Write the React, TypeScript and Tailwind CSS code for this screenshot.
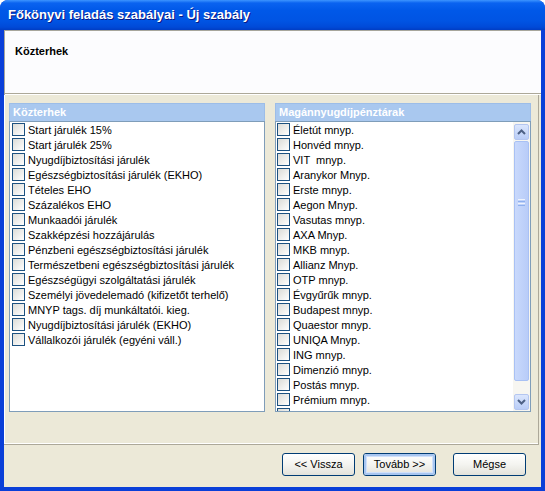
import React from "react";

const kozterhek = [
  "Start járulék 15%",
  "Start járulék 25%",
  "Nyugdíjbiztosítási járulék",
  "Egészségbiztosítási járulék (EKHO)",
  "Tételes EHO",
  "Százalékos EHO",
  "Munkaadói járulék",
  "Szakképzési hozzájárulás",
  "Pénzbeni egészségbiztosítási járulék",
  "Természetbeni egészségbiztosítási járulék",
  "Egészségügyi szolgáltatási járulék",
  "Személyi jövedelemadó (kifizetőt terhelő)",
  "MNYP tags. díj munkáltatói. kieg.",
  "Nyugdíjbiztosítási járulék (EKHO)",
  "Vállalkozói járulék (egyéni váll.)",
];

const penztarak = [
  "Életút mnyp.",
  "Honvéd mnyp.",
  "VIT  mnyp.",
  "Aranykor Mnyp.",
  "Erste mnyp.",
  "Aegon Mnyp.",
  "Vasutas mnyp.",
  "AXA Mnyp.",
  "MKB mnyp.",
  "Allianz Mnyp.",
  "OTP mnyp.",
  "Évgyűrűk mnyp.",
  "Budapest mnyp.",
  "Quaestor mnyp.",
  "UNIQA Mnyp.",
  "ING mnyp.",
  "Dimenzió mnyp.",
  "Postás mnyp.",
  "Prémium mnyp.",
  "",
];

function CheckRow({ label }: { label: string }) {
  return (
    <div className="h-[15px] flex items-center shrink-0">
      <span className="w-[13px] h-[13px] shrink-0 border border-[#1c5180] bg-linear-to-br from-[#dcdcd7] to-white" />
      {label && <span className="ml-[3px] whitespace-pre text-black leading-[14px]">{label}</span>}
    </div>
  );
}

function Arrow({ up }: { up?: boolean }) {
  return (
    <svg width="9" height="6" viewBox="0 0 9 6">
      <path
        d={up ? "M1 5 L4.5 1.5 L8 5" : "M1 1 L4.5 4.5 L8 1"}
        fill="none"
        stroke="#4d6185"
        strokeWidth="2"
      />
    </svg>
  );
}

function ScrollBar() {
  return (
    <div className="w-[17px] shrink-0 flex flex-col bg-[#f7f6f1] pt-[2px] pb-[1px]">
      <div className="h-[16px] mx-[1px] rounded-[2px] border border-[#b4c6f0] bg-linear-to-b from-[#dbe6fd] to-[#b9cdf7] flex items-center justify-center">
        <Arrow up />
      </div>
      <div className="h-[240px] mx-[1px] mt-[1px] rounded-[2px] border border-[#a9c1f4] bg-linear-to-r from-[#c9d9fc] to-[#b8ccf8] flex items-center justify-center">
        <div className="flex flex-col gap-[1px] -mt-[118px]">
          <span className="w-[7px] h-[1px] bg-[#eef3fd]" />
          <span className="w-[7px] h-[1px] bg-[#8fb0ee]" />
          <span className="w-[7px] h-[1px] bg-[#eef3fd]" />
          <span className="w-[7px] h-[1px] bg-[#8fb0ee]" />
        </div>
      </div>
      <div className="flex-1" />
      <div className="h-[16px] mx-[1px] rounded-[2px] border border-[#b4c6f0] bg-linear-to-b from-[#dbe6fd] to-[#b9cdf7] flex items-center justify-center">
        <Arrow />
      </div>
    </div>
  );
}

function ListPanel({ title, items, scroll }: { title: string; items: string[]; scroll?: boolean }) {
  return (
    <div className="w-[256px] flex flex-col">
      <div className="h-[18px] bg-[#a9c8ef] border border-b-0 border-[#9cbde8] pl-[3px] flex items-center font-bold text-white">
        {title}
      </div>
      <div className="h-[291px] border border-[#7f9db9] bg-white flex overflow-hidden">
        <div className={`flex-1 flex flex-col overflow-hidden ${scroll ? "pl-[1px]" : "pl-[2px]"}`}>
          {items.map((it, i) => (
            <CheckRow key={i} label={it} />
          ))}
        </div>
        {scroll && <ScrollBar />}
      </div>
    </div>
  );
}

function XpButton({ label, focused }: { label: string; focused?: boolean }) {
  return (
    <button className="w-[73px] h-[23px] rounded-[3px] border border-[#003c74] bg-linear-to-b from-white via-[#f4f4f0] to-[#e3e2da] text-black text-[11px] flex items-center justify-center p-0">
      <span
        className={`w-full h-full rounded-[2px] flex items-center justify-center ${
          focused ? "border-2 border-[#a8c6f0] shadow-[inset_0_0_0_1px_#d0e1fb]" : ""
        }`}
      >
        {label}
      </span>
    </button>
  );
}

export default function App() {
  return (
    <div className="w-[545px] h-[491px] bg-white font-['Liberation_Sans',Arial,sans-serif] text-[11px]">
      <div className="w-full h-full flex flex-col rounded-t-[8px] bg-[#0a3fd8] overflow-hidden">
        <div className="h-[30px] shrink-0 bg-[linear-gradient(to_bottom,#3d95ff_0%,#0a63f0_10%,#0058e8_35%,#0054e3_70%,#004ad8_90%,#003dc4_100%)] flex items-center pl-[8px]">
          <span className="text-white font-bold text-[13px] [text-shadow:1px_1px_#0a1883]">
            Főkönyvi feladás szabályai - Új szabály
          </span>
        </div>
        <div className="flex-1 mx-[4px] mb-[4px] bg-[#ece9d8] flex flex-col">
          <div className="h-[65px] shrink-0 bg-[#fcfcfe] border-t border-l border-[#a7a69c] border-b-0 flex flex-col">
            <div className="flex-1 pl-[10px] pt-[12px] font-bold text-black">Közterhek</div>
            <div className="h-[1px] bg-[#aca899]" />
            <div className="h-[1px] bg-white" />
          </div>
          <div className="h-[350px] shrink-0 mr-[2px] border-r border-b border-[#aca899]">
            <div className="h-full border-l border-b border-white pt-[8px] pl-[4px] flex gap-[10px]">
              <ListPanel title="Közterhek" items={kozterhek} />
              <ListPanel title="Magánnyugdíjpénztárak" items={penztarak} scroll />
            </div>
          </div>
          <div className="flex justify-end pr-[15px] pt-[8px]">
            <XpButton label="<< Vissza" />
            <div className="w-[8px]" />
            <XpButton label="Tovább >>" focused />
            <div className="w-[17px]" />
            <XpButton label="Mégse" />
          </div>
        </div>
      </div>
    </div>
  );
}
